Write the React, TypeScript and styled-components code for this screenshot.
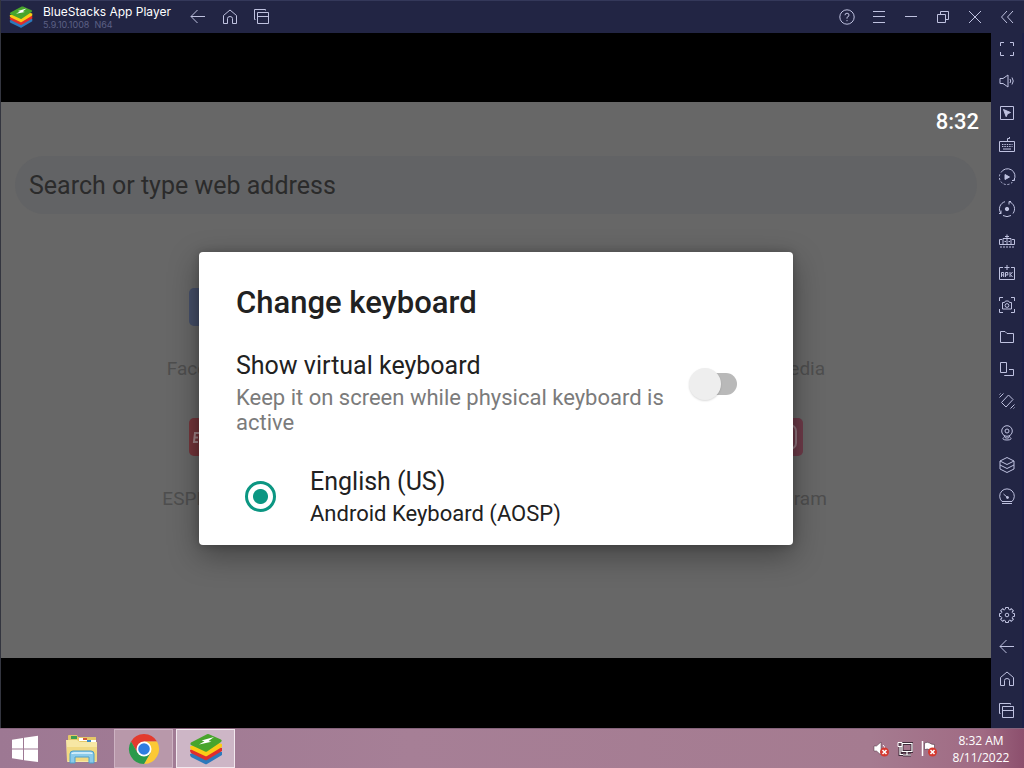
import React from "react";
import styled, { createGlobalStyle } from "styled-components";

const ui = '"Roboto", "Noto Sans", sans-serif';

const GlobalStyle = createGlobalStyle`
  *, *::before, *::after { box-sizing: border-box; }
  body { margin: 0; background: #000; font-family: ${ui}; }
  button { border: 0; padding: 0; margin: 0; background: none; font: inherit; color: inherit; cursor: pointer; }
  p, h1, h2 { margin: 0; font-weight: 400; }
  svg { display: block; }
`;

const Screen = styled.div`
  min-height: 100vh;
  display: flex;
  flex-direction: column;
`;

const PlayerWindow = styled.div`
  flex: 1;
  display: flex;
  flex-direction: column;
  border-left: 1px solid #33353f;
  background: #222544;
`;

const TitleBar = styled.header`
  height: 33px;
  display: flex;
  align-items: center;
  padding: 0 1px 0 8px;
  background: #222544;
  border-top: 1px solid #34385a;
  color: #bfc2e0;
`;

const TitleText = styled.div`
  width: 139px;
  margin-left: 10px;
  font-family: "Inter", sans-serif;
  white-space: nowrap;
`;

const AppName = styled.h1`
  font-size: 12px;
  line-height: 15px;
  color: #fff;
`;

const Version = styled.p`
  font-size: 9px;
  line-height: 12px;
  color: #5c6084;
`;

const IconButton = styled.button`
  width: 32px;
  height: 32px;
  display: flex;
  align-items: center;
  justify-content: center;
`;

const WindowButtons = styled.div`
  display: flex;
  margin-left: auto;
`;

const PlayerBody = styled.div`
  flex: 1;
  display: flex;
`;

const SideBar = styled.nav`
  width: 33px;
  display: flex;
  flex-direction: column;
  justify-content: space-between;
  padding-bottom: 1px;
  background: #222544;
  border-right: 2px solid #1c2048;
  color: #bfc2e0;
`;

const Display = styled.main`
  flex: 1;
  display: flex;
  flex-direction: column;
  padding: 69px 0 70px;
  background: #000;
`;

const Android = styled.div`
  position: relative;
  flex: 1;
  display: flex;
  flex-direction: column;
  background: #676767;
`;

const StatusBar = styled.div`
  height: 40px;
  padding-right: 12px;
  text-align: right;
  font-size: 22px;
  font-weight: 500;
  line-height: 40px;
  color: #fff;
`;

const SearchBox = styled.input`
  height: 58px;
  margin: 14px 14px 0;
  padding: 0 14px;
  border: 0;
  border-radius: 29px;
  background: #626365;
  font-family: ${ui};
  font-size: 25px;
  color: #2b2b2b;
  &::placeholder { color: #2b2b2b; opacity: 1; }
`;

const Shortcuts = styled.div`
  display: grid;
  grid-template-columns: repeat(4, 192px);
  justify-content: center;
  row-gap: 32px;
  padding-top: 74px;
`;

const Shortcut = styled.a<{ $col: number }>`
  grid-column: ${(p) => p.$col};
  display: flex;
  flex-direction: column;
  align-items: center;
  gap: 26px;
  font-size: 19px;
  line-height: 34px;
  color: #4e4e4e;
  text-decoration: none;
`;

const Tile = styled.span<{ $color: string }>`
  width: 38px;
  height: 38px;
  border-radius: 5px;
  background: ${(p) => p.$color};
`;

const Overlay = styled.div`
  position: absolute;
  inset: 0;
  display: flex;
  align-items: center;
  justify-content: center;
  padding-top: 37px;
`;

const Dialog = styled.section`
  width: 60%;
  min-width: 560px;
  padding: 31px 37px 15px;
  border-radius: 4px;
  background: #fff;
  box-shadow: 0 10px 30px rgba(0, 0, 0, 0.36), 0 0 8px rgba(0, 0, 0, 0.2);
  color: #212121;
`;

const DialogTitle = styled.h2`
  font-size: 31px;
  font-weight: 500;
  line-height: 40px;
`;

const SwitchRow = styled.label`
  display: flex;
  align-items: center;
  justify-content: space-between;
  margin-top: 27px;
  padding-right: 18px;
`;

const SwitchText = styled.span`
  width: 432px;
`;

const Primary = styled.span`
  display: block;
  font-size: 25px;
  line-height: 32px;
`;

const Secondary = styled.span`
  display: block;
  margin-top: 3px;
  font-size: 22px;
  line-height: 25px;
  color: #7b7b7b;
`;

const Switch = styled.input`
  appearance: none;
  position: relative;
  width: 50px;
  height: 34px;
  margin: 0 0 18px;
  &::before {
    content: "";
    position: absolute;
    left: 10px;
    right: 1px;
    top: 6px;
    height: 22px;
    border-radius: 11px;
    background: #b9b9b9;
  }
  &::after {
    content: "";
    position: absolute;
    left: 1px;
    top: 1px;
    width: 32px;
    height: 32px;
    border-radius: 50%;
    background: #eee;
    box-shadow: 0 1px 2px rgba(0, 0, 0, 0.15);
  }
`;

const RadioRow = styled.label`
  display: flex;
  align-items: center;
  gap: 34px;
  margin-top: 31px;
  padding-left: 9px;
`;

const Radio = styled.input`
  appearance: none;
  width: 31px;
  height: 31px;
  margin: 0 0 4px;
  border: 3px solid #0b9682;
  border-radius: 50%;
  background: radial-gradient(circle, #0b9682 7px, #fff 8px);
`;

const Subtype = styled.span`
  display: block;
  font-size: 22px;
  line-height: 32px;
`;

const TaskBar = styled.footer`
  height: 40px;
  display: flex;
  align-items: stretch;
  background: linear-gradient(90deg, #9d7893, #a67f96 40%, #a57b90 85%, #a06a83 96%, #8c4f6d);
  border-top: 1px solid #86647c;
  color: #fff;
`;

const TaskButton = styled.button<{ $state?: "open" | "active"; $width: number }>`
  width: ${(p) => p.$width}px;
  margin-right: ${(p) => (p.$state ? 3 : 0)}px;
  display: flex;
  align-items: center;
  justify-content: center;
  border: ${(p) => (p.$state ? "1px solid" : "0")};
  border-color: ${(p) => (p.$state === "active" ? "#f2e8ee" : "#cdb2c2")};
  background: ${(p) => (p.$state === "active" ? "#cdb6c6" : p.$state ? "#b898aa" : "transparent")};
`;

const Tray = styled.div`
  display: flex;
  align-items: center;
  gap: 8px;
  margin-left: auto;
`;

const Clock = styled.time`
  width: 72px;
  margin-right: 7px;
  font-family: "Open Sans", sans-serif;
  font-size: 12px;
  line-height: 17px;
  text-align: center;
  white-space: nowrap;
`;

const Line = ({ children, size = 18 }: { children: React.ReactNode; size?: number }) => (
  <svg width={size} height={size} viewBox="0 0 18 18" fill="none" stroke="currentColor" strokeWidth="1" aria-hidden="true">
    {children}
  </svg>
);

const BlueStacksLogo = ({ size }: { size: number }) => (
  <svg width={size} height={size} viewBox="0 0 34 34" aria-hidden="true">
    <path d="M1 22 17 16l16 4v3L18 32q-1 .7-2 0L2 25q-1-1-1-3z" fill="#2d79bb" />
    <path d="M1 18 17 12l16 4v3L18 28q-1 .7-2 0L2 21q-1-1-1-3z" fill="#e02d2c" />
    <path d="M1 14.500 17 8l16 4v3L18 24q-1 .7-2 0L2 17.500q-1-1-1-3z" fill="#fccb16" />
    <path d="M2 10.500 18 2.300q1-.5 2 0l12 5.200q1.700 1 0 2.500L18 19.400q-1 .7-2 0L2 13q-1.500-1 0-2.500z" fill="#48a52c" />
    <path d="M10 12.500 15.500 9.300 12.500 8.500 25 5l-5.500 4 3 .8z" fill="#fff" />
  </svg>
);

const Back = () => <Line><path d="M2 8.500h14M8.500 2 2 8.500 8.500 15" /></Line>;
const Home = () => <Line><path d="M2.500 7.500 9 2l6.500 5.500v8h-4v-5q0-2-2.500-2t-2.500 2v5h-4z" /></Line>;
const Recents = () => <Line><path d="M4.500 4.500h11v11h-11zM4.500 8.500h11M2.500 11.500h-1v-10h11v1" /></Line>;

const windowIcons: [string, React.ReactNode][] = [
  ["Help", <Line><circle cx="9" cy="9" r="7.200" /><path d="M7 7.200q0-2 2-2t2 1.800-2 2.300v1.400M9 12v1.200" /></Line>],
  ["Menu", <Line><path d="M3 3.500h12M3 8.500h12M3 14.500h12" /></Line>],
  ["Minimize", <Line><path d="M3 8.500h12" /></Line>],
  ["Restore", <Line><path d="M3.500 6.500h8v8h-8zM6.500 6V3.500h8v8h-2.500" /></Line>],
  ["Close", <Line><path d="m3 3 12 12M15 3 3 15" /></Line>],
  ["Collapse sidebar", <Line><path d="M9 3 3.500 9 9 15M15 3 9.500 9l5.500 6" /></Line>],
];

const sideIcons: [string, React.ReactNode][] = [
  ["Full screen", <Line><path d="M2.500 6V2.500H6M12 2.500h3.500V6M15.500 12v3.500H12M6 15.500H2.500V12" /></Line>],
  ["Volume", <Line><path d="M2 6.500h3L10 3v12l-5-3.500H2zM12 7q1.500 2 0 4M14 5.500q2.500 3.500 0 7" /></Line>],
  ["Lock cursor", <Line><path d="M2.500 2.500h13v13h-13z" /><path d="m5.500 5.500 7 3-3 1.200-1.300 3z" fill="currentColor" /></Line>],
  ["Game controls", <Line><path d="M1.500 5.500h15v10h-15zM9.500 5.500v-3h2v-1.500" /><path d="M4 8.500h10.500M4 10.500h10.500" strokeDasharray="1.400 1" /><path d="M5 13h8" /></Line>],
  ["Macro recorder", <Line><path d="M3 4.500a7.500 7.500 0 0 1 13 7.500M14 12.500h2.500V10" /><path d="M14.500 14A7.500 7.500 0 0 1 2 6" strokeDasharray="2 1.700" /><path d="m7 6.500 4.500 2.500L7 11.500z" fill="currentColor" /></Line>],
  ["Sync operations", <Line><path d="M3 13.500A7.500 7.500 0 0 1 7 1.700M11 1.700a7.500 7.500 0 0 1 4 11.800M5 15.500q4 2.300 8 0M3 10.500v3h-2M13 1.500h-2v3" /><circle cx="9" cy="9" r="1.700" fill="currentColor" /></Line>],
  ["Multi instance", <Line><path d="M4 7.500H1.500v5h15v-5H14M5 12V6.500h8V12M9 2.500V12M7 4.500h4M6.500 9.500h1.500M10.500 9.500h1.500" /><path d="M2 15h15" strokeDasharray="2 1" /></Line>],
  ["Install APK", <Line><path d="M5 3.500H1.500v12h15v-12H13M9 1v5M6.500 3.500h5M3.500 13V8.500h2.200V13M3.500 11h2.200M7.500 13V8.500h2.300V11H7.500M12 8v5M14.500 8 12.500 10.500l2 2.500" /></Line>],
  ["Screenshot", <Line><path d="M1.500 5V1.500H5M13 1.500h3.500V5M16.500 13v3.500H13M5 16.500H1.500V13M4.500 6.500h2L7.500 5h3l1 1.500h2v6.500h-9z" /><circle cx="9" cy="9.500" r="1.900" /></Line>],
  ["Media folder", <Line><path d="M2.500 3.500h4.500l2 2h6.500v9h-13z" /></Line>],
  ["Rotate", <Line><path d="M2.500 2.500h6v10h-6zM11 9.500h4.500v6h-9V15" /></Line>],
  ["Shake", <Line><path d="m3.500 10.500 7-7.500 4.500 4.500-7 7.500zM1.500 5.500l4-4M1.500 2.500l1-1M12.500 16.500l4-4M15.500 16.500l1-1" /></Line>],
  ["Location", <Line><circle cx="9" cy="7" r="5.300" /><circle cx="9" cy="7" r="2" /><path d="M6 11.500 7.500 14h3l1.500-2.500M5.500 13.500q-2 2.500 3.500 2.500t3.500-2.500" /></Line>],
  ["Layers", <Line><path d="m9 1.500 7 3.500-7 3.500L2 5zM2 5v8l7 3.500 7-3.500V5M2 9l7 3.500L16 9" /></Line>],
  ["Performance", <Line><path d="M4 13.500A7.300 7.300 0 1 1 14 13.500zM5.500 6 9.500 9.500M4 15.500h10" /><circle cx="9.500" cy="9.500" r="1" fill="currentColor" /></Line>],
];

const gearTeeth = [0, 45, 90, 135, 180, 225, 270, 315];
const bottomIcons: [string, React.ReactNode][] = [
  ["Settings", <Line><circle cx="9" cy="9" r="1.800" />{gearTeeth.map((a) => (
    <path key={a} transform={`rotate(${a} 9 9)`} d="M6.800 3.700 7.500 3V1.500h3V3l.7.7" />
  ))}</Line>],
  ["Back", <Back />],
  ["Home", <Home />],
  ["Recent apps", <Recents />],
];

const Buttons = ({ items }: { items: [string, React.ReactNode][] }) => (
  <>
    {items.map(([label, icon]) => (
      <IconButton key={label} type="button" aria-label={label}>{icon}</IconButton>
    ))}
  </>
);

const EspnMark = () => (
  <svg width="38" height="38" viewBox="0 0 38 38" fill="none" stroke="#a28487" strokeWidth="2" aria-hidden="true">
    <path d="M10 15H6l-1 9h4M6 19.500h3M18 15h-4l-1 4h4l-1 5h-4M21 24l1-9h4l-1 5h-3M29 24l1-9h4l-1 9" />
  </svg>
);

const InstagramMark = () => (
  <svg width="38" height="38" viewBox="0 0 38 38" fill="none" stroke="#93777f" strokeWidth="2" aria-hidden="true">
    <rect x="7" y="7" width="24" height="24" rx="6" />
    <circle cx="19" cy="19" r="6" />
  </svg>
);

const WindowsLogo = () => (
  <svg width="28" height="28" viewBox="0 0 28 28" fill="#fff" aria-hidden="true">
    <path d="M1 4.800 12 3v10.500H1zM13 2.800 27 .8v12.700H13zM1 14.500h11V25L1 23.300zM13 14.500h14V27l-14-1.800z" />
  </svg>
);

const FolderIcon = () => (
  <svg width="34" height="32" viewBox="0 0 34 32" aria-hidden="true">
    <path d="M3 3q0-1 1-1h8l1 2h18v24H3z" fill="#e5c868" />
    <path d="M6 3h6v3H6z" fill="#3f9e51" /><path d="M14 5h8v3h-8z" fill="#fff" /><path d="M18 5h4v2h-4z" fill="#d25b39" />
    <path d="M23 7h8v3h-8z" fill="#fff" /><path d="M22 7h4v2h-4z" fill="#3b8dc6" />
    <path d="M1 7h11l3 2h17v19q0 1-1 1H3q-1 0-1-1z" fill="#f7e7a4" />
    <path d="M2 14h30v14H2z" fill="#f1d982" />
    <path d="M5 30v-9q0-3 3-3h18q3 0 3 3v9h-5v-6H10v6z" fill="#8bcbea" stroke="#4c9fcb" />
    <path d="M7 21q0-1 2-1h16q2 0 2 1" fill="none" stroke="#e0f5fe" strokeWidth="1.500" />
  </svg>
);

const ChromeIcon = () => (
  <svg width="32" height="32" viewBox="0 0 32 32" aria-hidden="true">
    <path d="M3 8.500a15 15 0 0 1 26 0H16L9.500 19.750z" fill="#e33b2e" />
    <path d="M29 8.500A15 15 0 0 1 16 31l6.500-11.250L16 8.500z" fill="#fcc934" />
    <path d="M16 31A15 15 0 0 1 3 8.500l6.500 11.250h13z" fill="#2a9a4b" />
    <circle cx="16" cy="16" r="7.500" fill="#fff" /><circle cx="16" cy="16" r="5.800" fill="#2f7de1" />
  </svg>
);

const ErrorBadge = () => (
  <>
    <circle cx="11.500" cy="12" r="4.500" fill="#d5382f" />
    <path d="m9.500 10 4 4m0-4-4 4" stroke="#fff" strokeWidth="1.500" />
  </>
);

const VolumeTray = () => (
  <svg width="16" height="18" viewBox="0 0 16 18" aria-hidden="true">
    <path d="M1 6h2.500L8 2v13l-4.500-4H1z" fill="#fff" stroke="#4c3443" strokeWidth=".5" />
    <path d="M10 5q2 2 1.500 3" fill="none" stroke="#fff" /><ErrorBadge />
  </svg>
);

const NetworkTray = () => (
  <svg width="16" height="18" viewBox="0 0 16 18" aria-hidden="true">
    <path d="M5 3.500h10v8H5zM10 11.500v3M6 15h8M3 6v8.500h3" fill="none" stroke="#3f2b3a" strokeWidth="3" />
    <path d="M5 3.500h10v8H5zM10 11.500v3M6 15h8M3 6v8.500h3" fill="none" stroke="#fff" strokeWidth="1.200" />
    <path d="M1 2.500h4v4H1z" fill="#5c4053" stroke="#fff" />
  </svg>
);

const FlagTray = () => (
  <svg width="16" height="18" viewBox="0 0 16 18" aria-hidden="true">
    <path d="M1.500 1v15" stroke="#fff" strokeWidth="1.500" />
    <path d="M3.500 3q3-1.500 5 0t5 1.500v6q-3 .5-5-.8t-5 0z" fill="#fff" stroke="#4c3443" strokeWidth=".6" /><ErrorBadge />
  </svg>
);

export default function App() {
  return (
    <Screen>
      <GlobalStyle />
      <PlayerWindow>
        <TitleBar>
          <BlueStacksLogo size={24} />
          <TitleText>
            <AppName>BlueStacks App Player</AppName>
            <Version>5.9.10.1008&nbsp; N64</Version>
          </TitleText>
          <Buttons items={[["Go back", <Back />], ["Go home", <Home />], ["Recents", <Recents />]]} />
          <WindowButtons><Buttons items={windowIcons} /></WindowButtons>
        </TitleBar>
        <PlayerBody>
          <Display>
            <Android>
              <StatusBar>8:32</StatusBar>
              <SearchBox type="text" aria-label="Search" placeholder="Search or type web address" />
              <Shortcuts>
                <Shortcut href="#facebook" $col={1}><Tile $color="#454f69" />Facebook</Shortcut>
                <Shortcut href="#wikipedia" $col={4}><Tile $color="#676767" />Wikipedia</Shortcut>
                <Shortcut href="#espn" $col={1}><Tile $color="#74353a"><EspnMark /></Tile>ESPNcric…</Shortcut>
                <Shortcut href="#instagram" $col={4}><Tile $color="#6e3b49"><InstagramMark /></Tile>Instagram</Shortcut>
              </Shortcuts>
              <Overlay>
                <Dialog role="dialog" aria-labelledby="dialog-title">
                  <DialogTitle id="dialog-title">Change keyboard</DialogTitle>
                  <SwitchRow>
                    <SwitchText>
                      <Primary>Show virtual keyboard</Primary>
                      <Secondary>Keep it on screen while physical keyboard is active</Secondary>
                    </SwitchText>
                    <Switch type="checkbox" role="switch" />
                  </SwitchRow>
                  <RadioRow>
                    <Radio type="radio" name="keyboard" defaultChecked />
                    <span>
                      <Primary>English (US)</Primary>
                      <Subtype>Android Keyboard (AOSP)</Subtype>
                    </span>
                  </RadioRow>
                </Dialog>
              </Overlay>
            </Android>
          </Display>
          <SideBar aria-label="Player tools">
            <div><Buttons items={sideIcons} /></div>
            <div><Buttons items={bottomIcons} /></div>
          </SideBar>
        </PlayerBody>
      </PlayerWindow>
      <TaskBar>
        <TaskButton type="button" aria-label="Start" $width={50}><WindowsLogo /></TaskButton>
        <TaskButton type="button" aria-label="File Explorer" $width={64}><FolderIcon /></TaskButton>
        <TaskButton type="button" aria-label="Chrome" $width={59} $state="open"><ChromeIcon /></TaskButton>
        <TaskButton type="button" aria-label="BlueStacks" $width={59} $state="active"><BlueStacksLogo size={34} /></TaskButton>
        <Tray>
          <VolumeTray />
          <NetworkTray />
          <FlagTray />
          <Clock>8:32 AM<br />8/11/2022</Clock>
        </Tray>
      </TaskBar>
    </Screen>
  );
}
